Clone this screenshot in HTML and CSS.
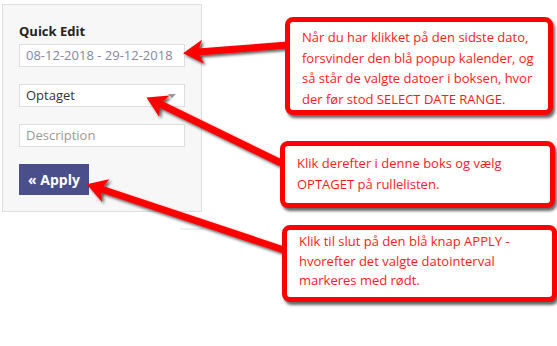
FILE: index.html
```html
<!DOCTYPE html>
<html lang="da">
<head>
<meta charset="UTF-8">
<meta name="viewport" content="width=device-width, initial-scale=1.0">
<title>Quick Edit</title>
<link rel="stylesheet" href="styles.css">
</head>
<body>
<div class="quick-edit">
    <h4 class="title">Quick Edit</h4>
    <div class="field date">08-12-2018 - 29-12-2018</div>
    <div class="field select">Optaget<span class="caret"></span></div>
    <div class="field placeholder">Description</div>
    <button class="apply">&laquo; Apply</button>
</div>

<!-- annotations -->
<svg class="arrows" width="557" height="346">
    <defs>
        <marker id="head" markerUnits="userSpaceOnUse" markerWidth="22" markerHeight="24"
                viewBox="0 0 22 24" refX="5" refY="12" orient="auto">
            <path d="M0,0 L20,12 L0,24 L5,12 z" fill="#ff0000"/>
        </marker>
        <filter id="shadow" x="-10%" y="-20%" width="130%" height="150%">
            <feDropShadow dx="2" dy="2" stdDeviation="1.4" flood-color="#000" flood-opacity="0.65"/>
        </filter>
    </defs>
    <rect x="180" y="228" width="24" height="2" fill="#eeeeee"/>
    <g filter="url(#shadow)" stroke="#ff0000" stroke-width="7" stroke-linecap="round">
        <line x1="288" y1="45" x2="198" y2="52" marker-end="url(#head)"/>
        <line x1="279" y1="162" x2="160" y2="104" marker-end="url(#head)"/>
        <line x1="284" y1="250" x2="101" y2="189" marker-end="url(#head)"/>
    </g>
</svg>

<div class="callout c1">Når du har klikket på den sidste dato, forsvinder den blå popup kalender, og så står de valgte datoer i boksen, hvor der før stod SELECT DATE RANGE.</div>
<div class="callout c2">Klik derefter i denne boks og vælg OPTAGET på rullelisten.</div>
<div class="callout c3">Klik til slut på den blå knap APPLY - hvorefter det valgte datointerval markeres med rødt.</div>
</body>
</html>
```

FILE: styles.css
```css
/* Quick edit panel */
body {
    margin: 0;
    background: #fff;
    font-family: "Open Sans", Arial, sans-serif;
    position: relative;
    width: 557px;
    height: 346px;
    overflow: hidden;
}

.quick-edit {
    margin: 4px 0 0 2px;
    width: 166px;
    padding: 17px 16px 16px 16px;
    background: #f7f7f7;
    border: 1px solid #dddddd;
}

.title {
    margin: 0 0 4px 0;
    font-size: 13px;
    font-weight: 700;
    color: #222;
    line-height: 18px;
}

.field {
    position: relative;
    height: 21px;
    margin-bottom: 17px;
    padding: 0 6px;
    background: #fff;
    border: 1px solid #dddddd;
    font-size: 13px;
    line-height: 21px;
    color: #333;
}

.field.date {
    color: #8486a3;
}

.field.placeholder {
    color: #999;
}

.caret {
    position: absolute;
    right: 8px;
    top: 9px;
    border-left: 4px solid transparent;
    border-right: 4px solid transparent;
    border-top: 4px solid #999;
}

.apply {
    display: block;
    width: 70px;
    height: 31px;
    padding: 0;
    border: 0;
    background: #4a4f8c;
    color: #fff;
    font-family: "Open Sans", Arial, sans-serif;
    font-size: 14px;
    font-weight: 700;
}

/* annotations */
.arrows {
    position: absolute;
    left: 0;
    top: 0;
}

.callout {
    position: absolute;
    box-sizing: border-box;
    background: #fff;
    border: 5px solid #ff0000;
    border-radius: 8px;
    box-shadow: 2px 3px 3px rgba(0, 0, 0, 0.6);
    padding: 5px 10px 0 12px;
    color: #ff1a1a;
    font-family: "Open Sans", Arial, sans-serif;
    font-size: 13px;
    line-height: 20.5px;
}

.c1 {
    left: 285px;
    top: 17px;
    width: 268px;
    height: 98px;
}

.c2 {
    left: 280px;
    top: 141px;
    width: 275px;
    height: 67px;
    padding-top: 7px;
}

.c3 {
    left: 282px;
    top: 225px;
    width: 275px;
    height: 77px;
    padding-top: 2px;
    line-height: 19.5px;
}
```
